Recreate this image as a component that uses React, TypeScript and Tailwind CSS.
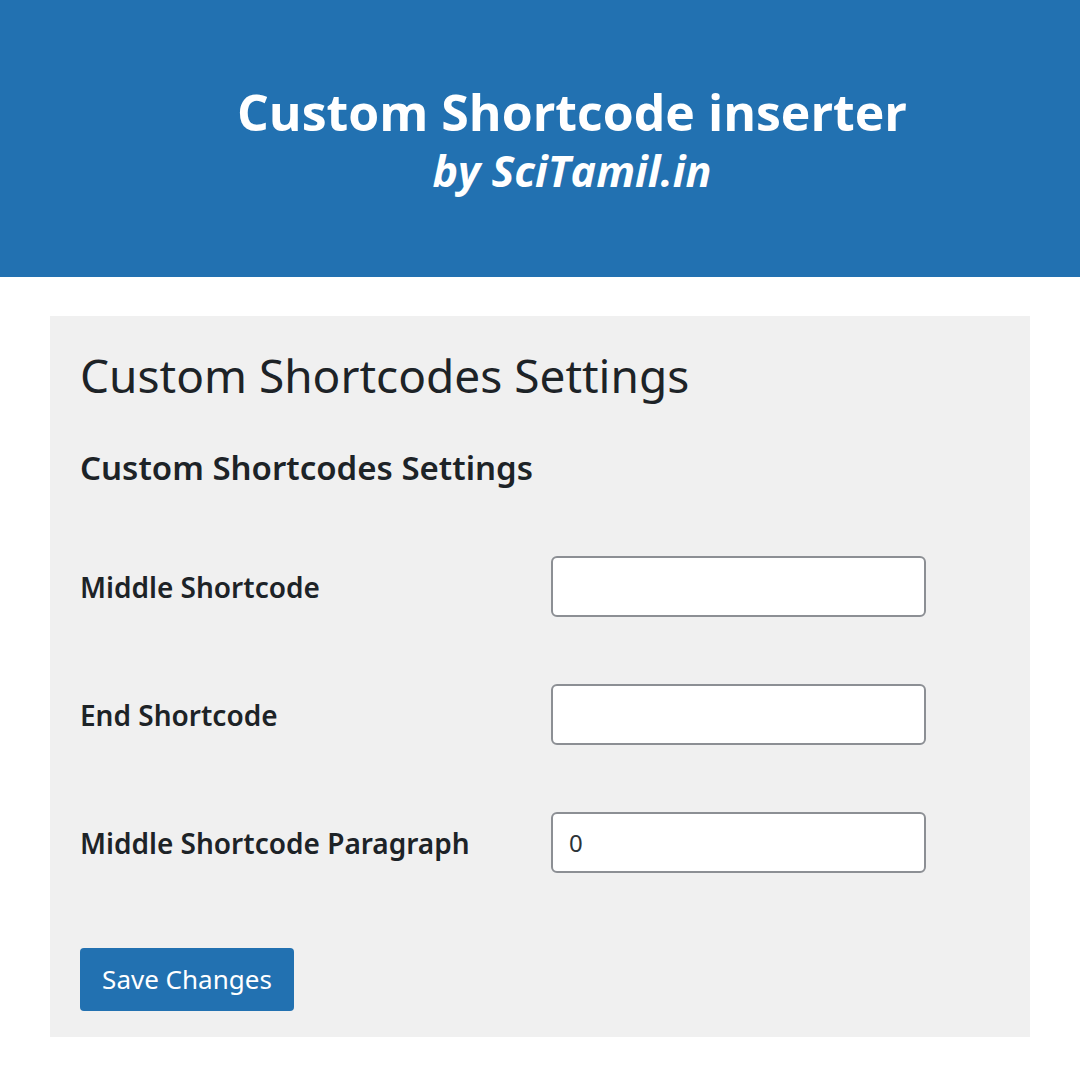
export default function App() {
  const fields = [
    { label: "Middle Shortcode", value: "" },
    { label: "End Shortcode", value: "" },
    { label: "Middle Shortcode Paragraph", value: "0" },
  ];

  return (
    <main className="w-[1080px] h-[1080px] bg-white flex flex-col overflow-hidden" style={{ fontFamily: '"Noto Sans", "Open Sans", sans-serif' }}>
      {/* Banner */}
      <header className="h-[277px] bg-[#2271b1] flex flex-col items-center pt-[80px] pl-[64px] text-white">
        <h1 className="text-[50px] font-bold leading-[64px]" style={{ fontFamily: '"Open Sans", sans-serif' }}>
          Custom Shortcode inserter
        </h1>
        <p className="text-[43px] font-bold italic leading-[54px] mt-[0px]" style={{ fontFamily: '"Open Sans", sans-serif' }}>
          by SciTamil.in
        </p>
      </header>

      {/* Settings panel */}
      <section className="mt-[39px] mx-[50px] h-[721px] bg-[#f0f0f0] px-[30px] pt-[28px] text-[#1d2327]">
        <h2 className="text-[46px] font-normal leading-[62px]">Custom Shortcodes Settings</h2>
        <h3 className="mt-[40px] text-[33px] font-semibold leading-[44px]">Custom Shortcodes Settings</h3>

        <div className="mt-[66px] flex flex-col gap-[67px]">
          {fields.map((f) => (
            <div key={f.label} className="flex items-center">
              <label className="w-[471px] text-[28px] font-semibold">{f.label}</label>
              <input
                type="text"
                defaultValue={f.value}
                className="w-[375px] h-[61px] bg-white border-2 border-[#8c8f94] rounded-[6px] px-[16px] text-[24px] text-[#2c3338] outline-none"
              />
            </div>
          ))}
        </div>

        <button className="mt-[75px] w-[214px] h-[63px] bg-[#2271b1] rounded-[4px] text-white text-[26px]">
          Save Changes
        </button>
      </section>
    </main>
  );
}
